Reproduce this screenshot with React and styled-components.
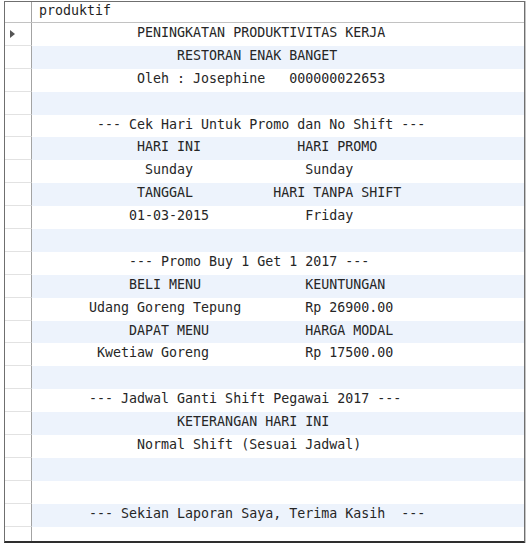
import styled, { createGlobalStyle } from "styled-components";

const GlobalStyle = createGlobalStyle`
  body {
    margin: 0;
    background: #ffffff;
    font-family: "DejaVu Sans Mono", "Liberation Mono", monospace;
  }
`;

const ROW_HEIGHT = "22.9px";

const Grid = styled.div`
  box-sizing: border-box;
  margin: 1px 0 0 4px;
  width: 521px;
  height: 542px;
  border: 1px solid #6f6f6f;
  border-bottom: 2px solid #2e2e2e;
  box-shadow: 1px 0 0 #c4c4c4;
  overflow: hidden;
  background: #ffffff;
`;

const HeaderRow = styled.div`
  display: flex;
  height: 20px;
  border-bottom: 1px solid #c2c2c2;
`;

const Indicator = styled.div`
  box-sizing: border-box;
  flex: 0 0 27px;
  display: flex;
  align-items: center;
  padding-left: 5px;
  border-right: 1px solid #a3a3a3;
  border-bottom: ${(p) => (p.$line ? "1px solid #e2e2e2" : "none")};
  background: #ffffff;
`;

const HeaderCell = styled.div`
  flex: 1;
  padding-left: 7px;
  font-size: 13.3px;
  line-height: 17px;
  color: #1f1f1f;
  white-space: pre;
`;

const Row = styled.div`
  display: flex;
  height: ${ROW_HEIGHT};
`;

const Cell = styled.div`
  flex: 1;
  padding-left: 9px;
  font-size: 13.3px;
  line-height: 19px;
  color: #262626;
  white-space: pre;
  background: ${(p) => (p.$alt ? "#edf3fc" : "#ffffff")};
`;

const pad = (n) => " ".repeat(n);
const two = (a, left, b, col) => pad(a) + left + pad(col - a - left.length) + b;

const rows = [
  pad(12) + "PENINGKATAN PRODUKTIVITAS KERJA",
  pad(17) + "RESTORAN ENAK BANGET",
  pad(12) + "Oleh : Josephine   000000022653",
  "",
  pad(7) + "--- Cek Hari Untuk Promo dan No Shift ---",
  two(12, "HARI INI", "HARI PROMO", 32),
  two(13, "Sunday", "Sunday", 33),
  two(12, "TANGGAL", "HARI TANPA SHIFT", 29),
  two(11, "01-03-2015", "Friday", 33),
  "",
  pad(11) + "--- Promo Buy 1 Get 1 2017 ---",
  two(11, "BELI MENU", "KEUNTUNGAN", 33),
  two(6, "Udang Goreng Tepung", "Rp 26900.00", 33),
  two(11, "DAPAT MENU", "HARGA MODAL", 33),
  two(7, "Kwetiaw Goreng", "Rp 17500.00", 33),
  "",
  pad(6) + "--- Jadwal Ganti Shift Pegawai 2017 ---",
  pad(17) + "KETERANGAN HARI INI",
  pad(12) + "Normal Shift (Sesuai Jadwal)",
  "",
  "",
  pad(6) + "--- Sekian Laporan Saya, Terima Kasih  ---",
  "",
];

function Pointer() {
  return (
    <svg width="5" height="8" viewBox="0 0 5 8">
      <polygon points="0,0 5,4 0,8" fill="#555555" />
    </svg>
  );
}

export default function App() {
  return (
    <>
      <GlobalStyle />
      <Grid>
        <HeaderRow>
          <Indicator />
          <HeaderCell>produktif</HeaderCell>
        </HeaderRow>
        {rows.map((text, i) => (
          <Row key={i}>
            <Indicator $line>{i === 0 && <Pointer />}</Indicator>
            <Cell $alt={i % 2 === 1}>{text}</Cell>
          </Row>
        ))}
      </Grid>
    </>
  );
}
